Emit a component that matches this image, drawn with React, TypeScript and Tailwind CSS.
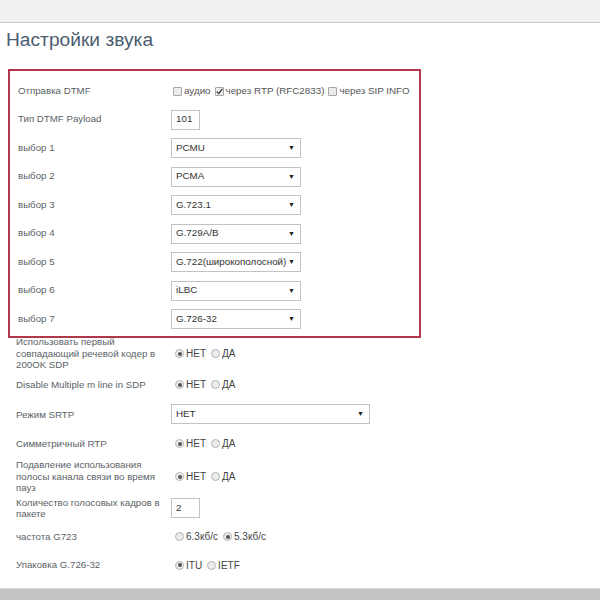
import React from "react";

const FONT = { fontFamily: '"Liberation Sans", Arial, sans-serif' };

function Box({ checked }: { checked?: boolean }) {
  return (
    <span className="relative mr-[1px] inline-block h-[9px] w-[9px] shrink-0 rounded-[1px] border border-[#a6a6a6] bg-[#ececec]">
      {checked && (
        <svg viewBox="0 0 9 9" className="absolute left-[-1px] top-[-1px] h-[9px] w-[9px]">
          <path d="M1.8 4.6 L3.7 6.6 L7.4 1.8" fill="none" stroke="#333" strokeWidth="1.3" />
        </svg>
      )}
    </span>
  );
}

function Radio({ checked }: { checked?: boolean }) {
  return (
    <span className="mr-[1px] inline-flex h-[9px] w-[9px] shrink-0 items-center justify-center rounded-full border border-[#b4b4b4] bg-[#ececec]">
      {checked && <span className="h-[4px] w-[4px] rounded-full bg-[#555]" />}
    </span>
  );
}

function Select({ value, wide }: { value: string; wide?: boolean }) {
  return (
    <div
      className={`flex h-[20px] items-center justify-between border border-[#c2c2c2] bg-white pl-[4px] pr-[5px] text-[9.8px] text-[#333] ${
        wide ? "w-[199px]" : "w-[130px]"
      }`}
    >
      <span className="whitespace-nowrap">{value}</span>
      <span className="text-[7px] text-[#222]">▼</span>
    </div>
  );
}

function TextBox({ value }: { value: string }) {
  return (
    <div className="flex h-[20px] w-[29px] items-center border border-[#c2c2c2] bg-white pl-[4px] text-[9.8px] text-[#333]">
      {value}
    </div>
  );
}

function RadioPair({ items, on }: { items: string[]; on: number }) {
  return (
    <div className="flex items-center gap-[5px] whitespace-nowrap pl-[4px] text-[10px] text-[#444]">
      {items.map((t, i) => (
        <span key={t} className="flex items-center gap-[1px]">
          <Radio checked={i === on} />
          {t}
        </span>
      ))}
    </div>
  );
}

const CODECS = ["PCMU", "PCMA", "G.723.1", "G.729A/B", "G.722(широкополосной)", "iLBC", "G.726-32"];

type Row = { label: string; h: string; control: React.ReactNode };

const OUTER: Row[] = [
  {
    label: "Использовать первый совпадающий речевой кодер в 200OK SDP",
    h: "h-[32px]",
    control: <RadioPair items={["НЕТ", "ДА"]} on={0} />,
  },
  { label: "Disable Multiple m line in SDP", h: "h-[30.5px]", control: <RadioPair items={["НЕТ", "ДА"]} on={0} /> },
  { label: "Режим SRTP", h: "h-[28.5px]", control: <Select value="НЕТ" wide /> },
  { label: "Симметричный RTP", h: "h-[30px]", control: <RadioPair items={["НЕТ", "ДА"]} on={0} /> },
  {
    label: "Подавление использования полосы канала связи во время пауз",
    h: "h-[36px]",
    control: <RadioPair items={["НЕТ", "ДА"]} on={0} />,
  },
  { label: "Количество голосовых кадров в пакете", h: "h-[27px]", control: <TextBox value="2" /> },
  { label: "частота G723", h: "h-[30px]", control: <RadioPair items={["6.3кб/с", "5.3кб/с"]} on={1} /> },
  { label: "Упаковка G.726-32", h: "h-[27px]", control: <RadioPair items={["ITU", "IETF"]} on={0} /> },
  { label: "", h: "h-[32px]", control: <RadioPair items={["НЕТ", "ДА"]} on={0} /> },
];

export default function App() {
  return (
    <div className="relative flex h-[600px] w-[600px] flex-col overflow-hidden bg-white" style={FONT}>
      <div className="h-[23px] shrink-0 border-b border-[#c9c9c9] bg-[#f1f1f1]" />

      <h1 className="mt-[4px] pl-[6px] text-[19.2px] leading-[26px] text-[#4c5c70]">Настройки звука</h1>
      <div className="mt-[7px] h-px w-[455px] bg-[#e6e6e6]" />

      <div className="ml-[8px] mt-[9px] w-[413px] border-2 border-[#b3374a] pb-[2px] pt-[6px]">
        <div className="flex h-[28.5px] items-center">
          <div className="w-[161px] shrink-0 pl-[8px] text-[9.7px] text-[#5a5f66]">Отправка DTMF</div>
          <div className="flex items-center gap-[4px] whitespace-nowrap pl-[2px] text-[9.8px] text-[#555]">
            <span className="flex items-center gap-[1px]">
              <Box />
              аудио
            </span>
            <span className="flex items-center gap-[1px]">
              <Box checked />
              через RTP (RFC2833)
            </span>
            <span className="flex items-center gap-[1px]">
              <Box />
              через SIP INFO
            </span>
          </div>
        </div>
        <div className="flex h-[28.5px] items-center">
          <div className="w-[161px] shrink-0 pl-[8px] text-[9.7px] text-[#5a5f66]">Тип DTMF Payload</div>
          <TextBox value="101" />
        </div>
        {CODECS.map((c, i) => (
          <div key={c} className="flex h-[28.5px] items-center">
            <div className="w-[161px] shrink-0 pl-[8px] text-[9.7px] text-[#5a5f66]">выбор {i + 1}</div>
            <Select value={c} />
          </div>
        ))}
      </div>

      <div className="flex flex-col">
        {OUTER.map((r, i) => (
          <div key={i} className={`flex items-center ${r.h}`}>
            <div className="w-[171px] shrink-0 pl-[16px] pr-[10px] text-[9.7px] leading-[11.5px] text-[#5a5f66]">
              {r.label}
            </div>
            {r.control}
          </div>
        ))}
      </div>

      <div className="absolute bottom-0 left-0 h-[12px] w-full border-t border-[#dcdcdc] bg-[#c3c3c3]" />
    </div>
  );
}
